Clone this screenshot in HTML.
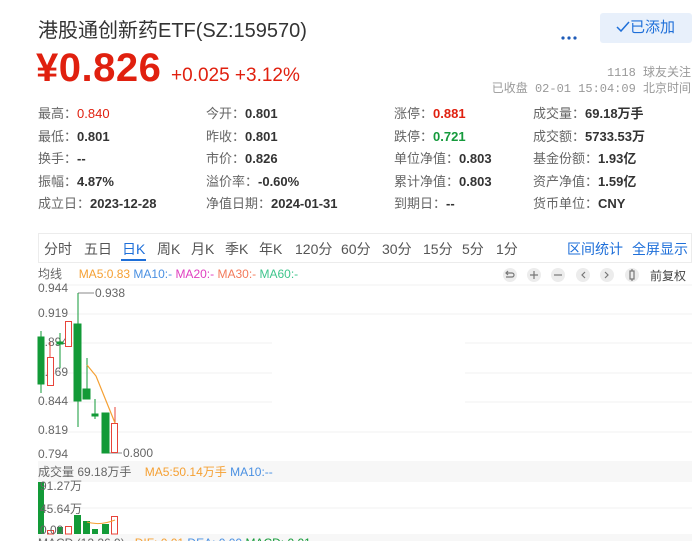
<!DOCTYPE html>
<html><head><meta charset="utf-8">
<style>
*{margin:0;padding:0;box-sizing:border-box}
html,body{width:700px;height:541px;overflow:hidden}
body{background:#fff;font-family:"Liberation Sans","Noto Sans CJK SC",sans-serif;color:#333;position:relative}
.a{position:absolute;white-space:nowrap}
.lb{color:#666;font-size:13px}
.v{font-weight:bold;color:#333;font-size:13px}
.tab{position:absolute;top:239px;font-size:14px;color:#555}
</style></head><body>
<div class="a" style="left:38px;top:14px;font-size:20px;color:#333">港股通创新药ETF(SZ:159570)</div>
<div class="a" style="left:36px;top:46px;font-size:40px;font-weight:bold;color:#e0200f;letter-spacing:0.5px">¥0.826</div>
<div class="a" style="left:171px;top:65px;font-size:19px;color:#e0200f">+0.025 +3.12%</div>
<div class="a" style="left:560px;top:27px;width:20px;height:4px">
<svg width="20" height="4"><circle cx="3" cy="2" r="1.6" fill="#1e5bb8"/><circle cx="9" cy="2" r="1.6" fill="#1e5bb8"/><circle cx="15" cy="2" r="1.6" fill="#1e5bb8"/></svg></div>
<div class="a" style="left:600px;top:13px;width:92px;height:30px;background:#e8f0fb;border-radius:3px;color:#1e6fd9;font-size:15px;line-height:30px;padding-left:16px"><svg width="14" height="12" style="vertical-align:-1px"><path d="M1 6l4 4 8-9" stroke="#1e6fd9" stroke-width="1.5" fill="none"/></svg>已添加</div>
<div class="a" style="right:9px;top:63px;font-size:12px;color:#999;font-family:'Liberation Mono','Noto Sans CJK SC',monospace">1118 球友关注</div>
<div class="a" style="right:9px;top:79px;font-size:12px;color:#999;font-family:'Liberation Mono','Noto Sans CJK SC',monospace">已收盘 02-01 15:04:09 北京时间</div>

<div class="a" style="left:38px;top:103px;line-height:22.5px"><span class="lb">最高：</span><span class="v" style="color:#e0200f;font-weight:normal">0.840</span><br><span class="lb">最低：</span><span class="v">0.801</span><br><span class="lb">换手：</span><span class="v">--</span><br><span class="lb">振幅：</span><span class="v">4.87%</span><br><span class="lb">成立日：</span><span class="v">2023-12-28</span></div>
<div class="a" style="left:206px;top:103px;line-height:22.5px"><span class="lb">今开：</span><span class="v">0.801</span><br><span class="lb">昨收：</span><span class="v">0.801</span><br><span class="lb">市价：</span><span class="v">0.826</span><br><span class="lb">溢价率：</span><span class="v">-0.60%</span><br><span class="lb">净值日期：</span><span class="v">2024-01-31</span></div>
<div class="a" style="left:394px;top:103px;line-height:22.5px"><span class="lb">涨停：</span><span class="v" style="color:#e0200f">0.881</span><br><span class="lb">跌停：</span><span class="v" style="color:#159a3c">0.721</span><br><span class="lb">单位净值：</span><span class="v">0.803</span><br><span class="lb">累计净值：</span><span class="v">0.803</span><br><span class="lb">到期日：</span><span class="v">--</span></div>
<div class="a" style="left:533px;top:103px;line-height:22.5px"><span class="lb">成交量：</span><span class="v">69.18万手</span><br><span class="lb">成交额：</span><span class="v">5733.53万</span><br><span class="lb">基金份额：</span><span class="v">1.93亿</span><br><span class="lb">资产净值：</span><span class="v">1.59亿</span><br><span class="lb">货币单位：</span><span class="v">CNY</span></div>

<div class="a" style="left:38px;top:233px;width:654px;height:30px;border:1px solid #ececec"></div>
<div class="tab" style="left:44px">分时</div><div class="tab" style="left:84px">五日</div>
<div class="tab" style="left:122px;color:#1e6fd9">日K</div>
<div class="a" style="left:121px;top:259px;width:25px;height:2px;background:#1e6fd9"></div>
<div class="tab" style="left:157px">周K</div><div class="tab" style="left:191px">月K</div><div class="tab" style="left:225px">季K</div><div class="tab" style="left:259px">年K</div>
<div class="tab" style="left:295px">120分</div><div class="tab" style="left:341px">60分</div><div class="tab" style="left:382px">30分</div><div class="tab" style="left:423px">15分</div><div class="tab" style="left:462px">5分</div><div class="tab" style="left:496px">1分</div>
<div class="tab" style="left:567px;color:#1e6fd9">区间统计</div><div class="tab" style="left:632px;color:#1e6fd9">全屏显示</div>

<div class="a" style="left:38px;top:265px;font-size:12px"><span style="color:#666">均线</span>&nbsp;&nbsp;&nbsp;&nbsp;&nbsp;<span style="color:#f5a033">MA5:0.83</span> <span style="color:#4a90e2">MA10:-</span> <span style="color:#e040c0">MA20:-</span> <span style="color:#f37a5a">MA30:-</span> <span style="color:#3ec58c">MA60:-</span></div>
<div class="a" style="left:650px;top:267px;font-size:12px;color:#444">前复权</div>

<svg class="a" style="left:0;top:0" width="700" height="541">
<g fill="#ececec" stroke="none">
<circle cx="510" cy="275" r="7"/><circle cx="534" cy="275" r="7"/><circle cx="558" cy="275" r="7"/><circle cx="583" cy="275" r="7"/><circle cx="607" cy="275" r="7"/><circle cx="632" cy="275" r="7"/>
<circle cx="680" cy="470" r="7"/>
</g>
<g stroke="#777" fill="none" stroke-width="1.2">
<path d="M506 273h6a2 2 0 0 1 0 4h-6M508 271l-2 2 2 2"/>
<path d="M530 275h8M534 271v8"/><path d="M554 275h8"/>
<path d="M585 272l-3 3 3 3"/><path d="M605 272l3 3-3 3"/>
<rect x="630" y="271" width="4" height="8"/><path d="M632 269v2M632 279v2"/>
<path d="M678 468l4 4M682 468l-4 4"/>
</g>
<g stroke="#f2f2f2" stroke-width="1">
<path d="M38 285H692M38 314H692M38 343H272M465 343H692M38 373H272M465 373H692M38 402H272M465 402H692M38 432H692"/>
<path d="M38 508H692"/>
</g>
<rect x="38" y="461" width="654" height="21" fill="#f7f7f7"/>
<rect x="38" y="534" width="654" height="7" fill="#f7f7f7"/>
<g font-size="12" fill="#666" font-family="Liberation Sans,sans-serif">
<text x="38" y="292">0.944</text><text x="38" y="317">0.919</text><text x="38" y="346">0.894</text><text x="38" y="376">0.869</text><text x="38" y="405">0.844</text><text x="38" y="434">0.819</text><text x="38" y="458">0.794</text>
<text x="95" y="297">0.938</text><text x="123" y="457">0.800</text>
</g>
<path d="M78 293H94M105 453H122" stroke="#888" stroke-width="1"/>
<g stroke="#129a37" fill="#129a37">
<path d="M41 331V393M60 333V368M78 293V427M87 358V399M95 399V419"/>
<rect x="38" y="337" width="6" height="47"/><rect x="57" y="342" width="6" height="2"/><rect x="74" y="324" width="7" height="77"/>
<rect x="83" y="389" width="7" height="10"/><rect x="92" y="414" width="6" height="2"/><rect x="102" y="413" width="7" height="40"/>
</g>
<g stroke="#e8443a" fill="#fff">
<path d="M50 342V357M115 407V423"/>
<rect x="47.5" y="357.5" width="6" height="28"/><rect x="65.5" y="321.5" width="6" height="25"/><rect x="111.5" y="423.5" width="6" height="29"/>
</g>
<path d="M87 365L96 376L115 423" stroke="#f5a033" fill="none" stroke-width="1.2"/>
<g fill="#129a37">
<rect x="38" y="482" width="6" height="52"/><rect x="57" y="527" width="6" height="7"/><rect x="74" y="515" width="7" height="19"/><rect x="83" y="521" width="7" height="13"/><rect x="92" y="529" width="6" height="5"/><rect x="102" y="524" width="7" height="10"/>
</g>
<g stroke="#e8443a" fill="none"><rect x="47.5" y="530.5" width="6" height="3.5"/><rect x="65.5" y="526.5" width="6" height="7.5"/><rect x="111.5" y="516.5" width="6" height="17.5"/></g>
<path d="M87 522Q100 526 115 520" stroke="#f5a033" fill="none"/>
<g font-size="12" fill="#666" font-family="Liberation Sans,Noto Sans CJK SC,sans-serif">
<text x="40" y="490">91.27万</text><text x="40" y="513">45.64万</text><text x="40" y="534">0.00</text>
</g>
</svg>
<div class="a" style="left:38px;top:463px;font-size:12px"><span style="color:#666">成交量 69.18万手</span>&nbsp;&nbsp;&nbsp;&nbsp;<span style="color:#f5a033">MA5:50.14万手</span> <span style="color:#4a90e2">MA10:--</span></div>
<div class="a" style="left:38px;top:536px;font-size:12px;color:#666">MACD (12,26,9)&nbsp;&nbsp;&nbsp;<span style="color:#f5a033">DIF: 0.01</span> <span style="color:#4a90e2">DEA: 0.00</span> <span style="color:#129a37">MACD: 0.01</span></div>
</body></html>
